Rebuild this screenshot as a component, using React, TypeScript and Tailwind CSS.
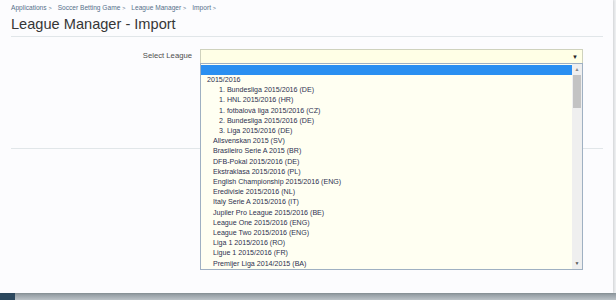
const crumbs = ["Applications", "Soccer Betting Game", "League Manager", "Import"];

const leagues: { name: string; num?: boolean }[] = [
  { name: "1. Bundesliga 2015/2016 (DE)", num: true },
  { name: "1. HNL 2015/2016 (HR)", num: true },
  { name: "1. fotbalová liga 2015/2016 (CZ)", num: true },
  { name: "2. Bundesliga 2015/2016 (DE)", num: true },
  { name: "3. Liga 2015/2016 (DE)", num: true },
  { name: "Allsvenskan 2015 (SV)" },
  { name: "Brasileiro Serie A 2015 (BR)" },
  { name: "DFB-Pokal 2015/2016 (DE)" },
  { name: "Ekstraklasa 2015/2016 (PL)" },
  { name: "English Championship 2015/2016 (ENG)" },
  { name: "Eredivisie 2015/2016 (NL)" },
  { name: "Italy Serie A 2015/2016 (IT)" },
  { name: "Jupiler Pro League 2015/2016 (BE)" },
  { name: "League One 2015/2016 (ENG)" },
  { name: "League Two 2015/2016 (ENG)" },
  { name: "Liga 1 2015/2016 (RO)" },
  { name: "Ligue 1 2015/2016 (FR)" },
  { name: "Premijer Liga 2014/2015 (BA)" },
];

const font = { fontFamily: "'Liberation Sans', Arial, sans-serif" };

export default function App() {
  return (
    <div className="flex h-[300px] w-[616px] flex-col overflow-hidden bg-[#eceef0]" style={font}>
      <div className="flex h-[293px]">
        <div className="relative w-[613px] bg-[#fcfcfe] pl-[11px] pr-[10px] pt-[3px] shadow-[1px_0_2px_rgba(0,0,0,0.12)]">
          {/* breadcrumb */}
          <div className="flex h-[10px] items-center gap-[6px] text-[6.6px] text-[#56708a]">
            {crumbs.map((c) => (
              <span key={c}>
                {c} <span className="text-[5.5px]">&gt;</span>
              </span>
            ))}
          </div>

          <h1 className="mt-[1px] h-[21px] text-[14.6px] leading-[21px] text-[#363636]">League Manager - Import</h1>
          <div className="mt-[1px] border-t border-[#e1e6e9]" />

          <div className="mt-[12px] flex h-[14px] items-center">
            <div className="w-[181px] text-right text-[7.7px] text-[#4d4d4d]">Select League</div>
            <div className="ml-[8px] flex h-[15px] w-[383px] items-center justify-end border border-b-0 border-[#cfd2bd] bg-[#ffffe6] pr-[4px]">
              <span className="text-[6px] leading-none text-[#222]">▼</span>
            </div>
          </div>

          <div className="mt-[85px] border-t border-[#e1e6e9]" />

          {/* open dropdown list */}
          <div className="absolute left-[200px] top-[63px] flex h-[207px] w-[383px] border border-[#9fb0c2] bg-[#fffff2]">
            <div className="flex-1 pt-[1px] text-[7.1px] leading-[10.2px] text-[#2d3150]">
              <div className="h-[10px] bg-[#2a8ff1]" />
              <div className="pl-[6px]">2015/2016</div>
              {leagues.map((l) => (
                <div key={l.name} className={l.num ? "pl-[18px]" : "pl-[12px]"}>
                  {l.name}
                </div>
              ))}
            </div>
            <div className="flex w-[10px] flex-col bg-[#efefef]">
              <div className="flex h-[11px] items-center justify-center text-[5px] leading-none text-[#888]">▲</div>
              <div className="mx-[1px] h-[33px] bg-[#c3c3c3]" />
              <div className="flex-1" />
              <div className="flex h-[11px] items-center justify-center text-[5px] leading-none text-[#555]">▼</div>
            </div>
          </div>
        </div>
        <div className="flex-1 bg-[#eef0f2]" />
      </div>
      <div className="flex h-[7px]">
        <div className="w-[15px] bg-[#2c485e]" />
        <div className="flex-1 bg-gradient-to-b from-[#8b959b] to-[#bcc3c8]" />
      </div>
    </div>
  );
}
